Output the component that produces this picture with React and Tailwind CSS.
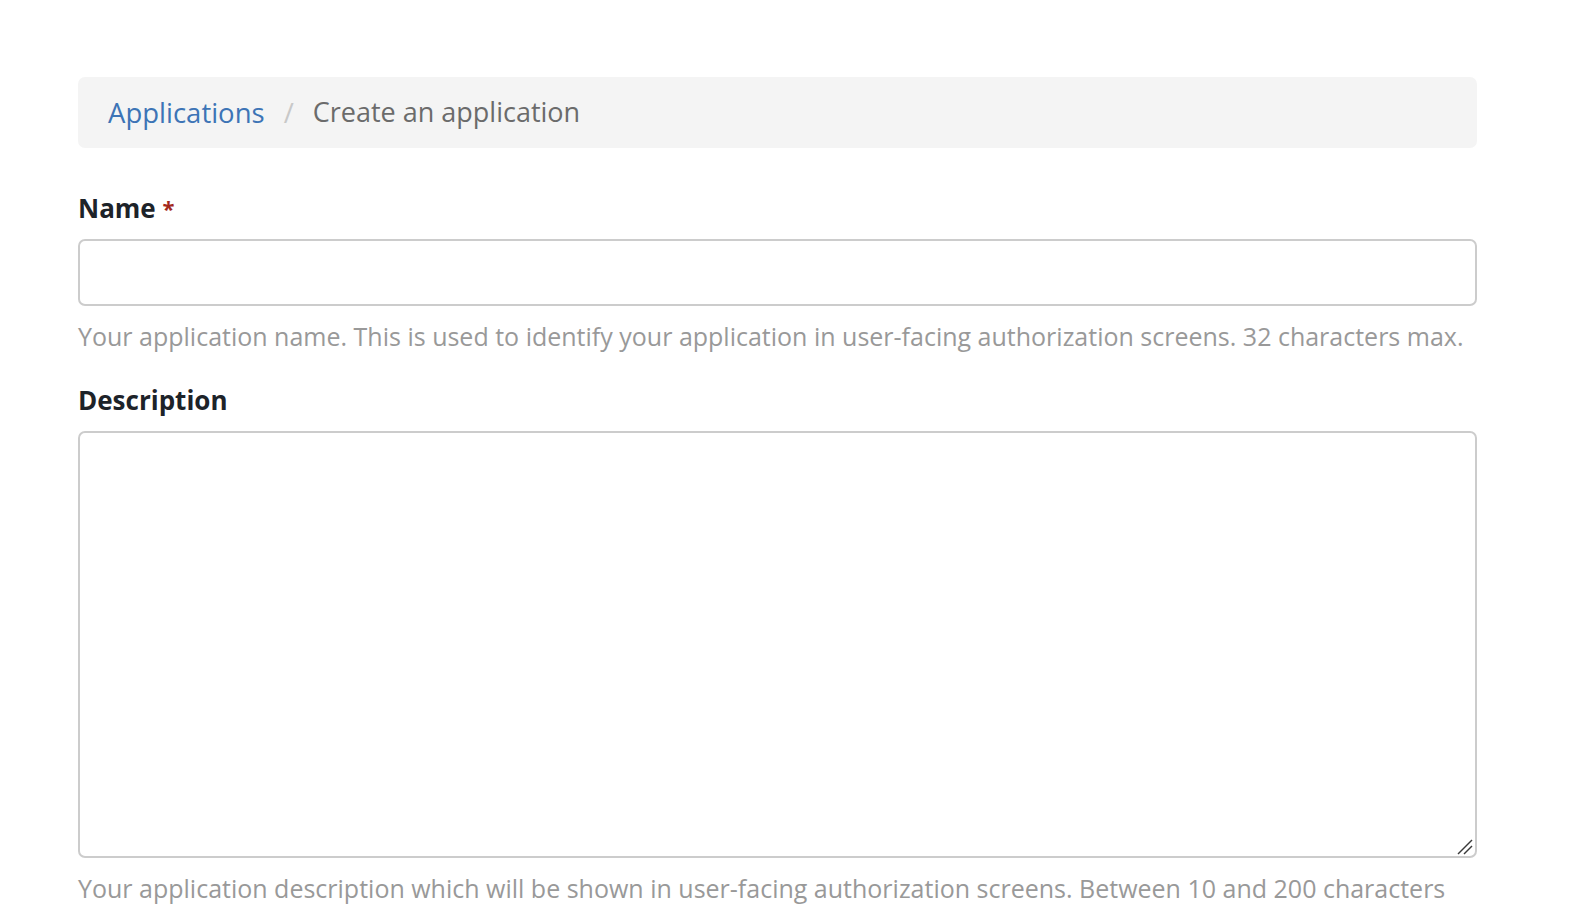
import React, { useState } from "react";

const font = { fontFamily: "'Open Sans', Lato, sans-serif" };

const App = () => {
  const [name, setName] = useState("");
  const [description, setDescription] = useState("");

  return (
    <div className="min-h-screen bg-white" style={font}>
      <div className="pt-[77px] ml-[78px] w-[1399px]">
        <nav className="flex items-center h-[71px] px-[30px] bg-[#f4f4f4] rounded-[7px] text-[27.5px]">
          <a href="#" className="text-[#3d74b6]">
            Applications
          </a>
          <span className="mx-[19px] text-[#c8c8c8]">/</span>
          <span className="text-[#6b6b6b] text-[27px]">Create an application</span>
        </nav>

        <div className="mt-[42px]">
          <label className="block text-[26px] font-bold text-[#1d2329] leading-[36px]">
            Name <span className="text-[#a3281c] text-[22px] align-top">*</span>
          </label>
          <input
            type="text"
            value={name}
            onChange={(e) => setName(e.target.value)}
            className="block mt-[13px] w-full h-[67px] border-2 border-[#cccccc] rounded-[7px] px-4 text-[25px] outline-none"
          />
          <p className="mt-[13px] text-[25px] leading-[34px] text-[#999999]">
            Your application name. This is used to identify your application in user-facing authorization screens. 32 characters max.
          </p>
        </div>

        <div className="mt-[29px]">
          <label className="block text-[26px] font-bold text-[#1d2329] leading-[36px]">
            Description
          </label>
          <div className="relative mt-[13px]">
            <textarea
              value={description}
              onChange={(e) => setDescription(e.target.value)}
              className="block w-full h-[427px] border-2 border-[#cccccc] rounded-[7px] px-4 py-3 text-[25px] outline-none resize-none"
            />
            <svg
              className="absolute right-[2px] bottom-[2px] pointer-events-none"
              width="18"
              height="18"
              viewBox="0 0 18 18"
            >
              <line x1="1" y1="16" x2="15" y2="2" stroke="#3a3a3a" strokeWidth="1.4" />
              <line x1="7" y1="16" x2="15" y2="8" stroke="#3a3a3a" strokeWidth="1.4" />
            </svg>
          </div>
          <p className="mt-[13px] text-[25px] leading-[34px] text-[#999999]">
            Your application description which will be shown in user-facing authorization screens. Between 10 and 200 characters
          </p>
        </div>
      </div>
    </div>
  );
};

export default App;
